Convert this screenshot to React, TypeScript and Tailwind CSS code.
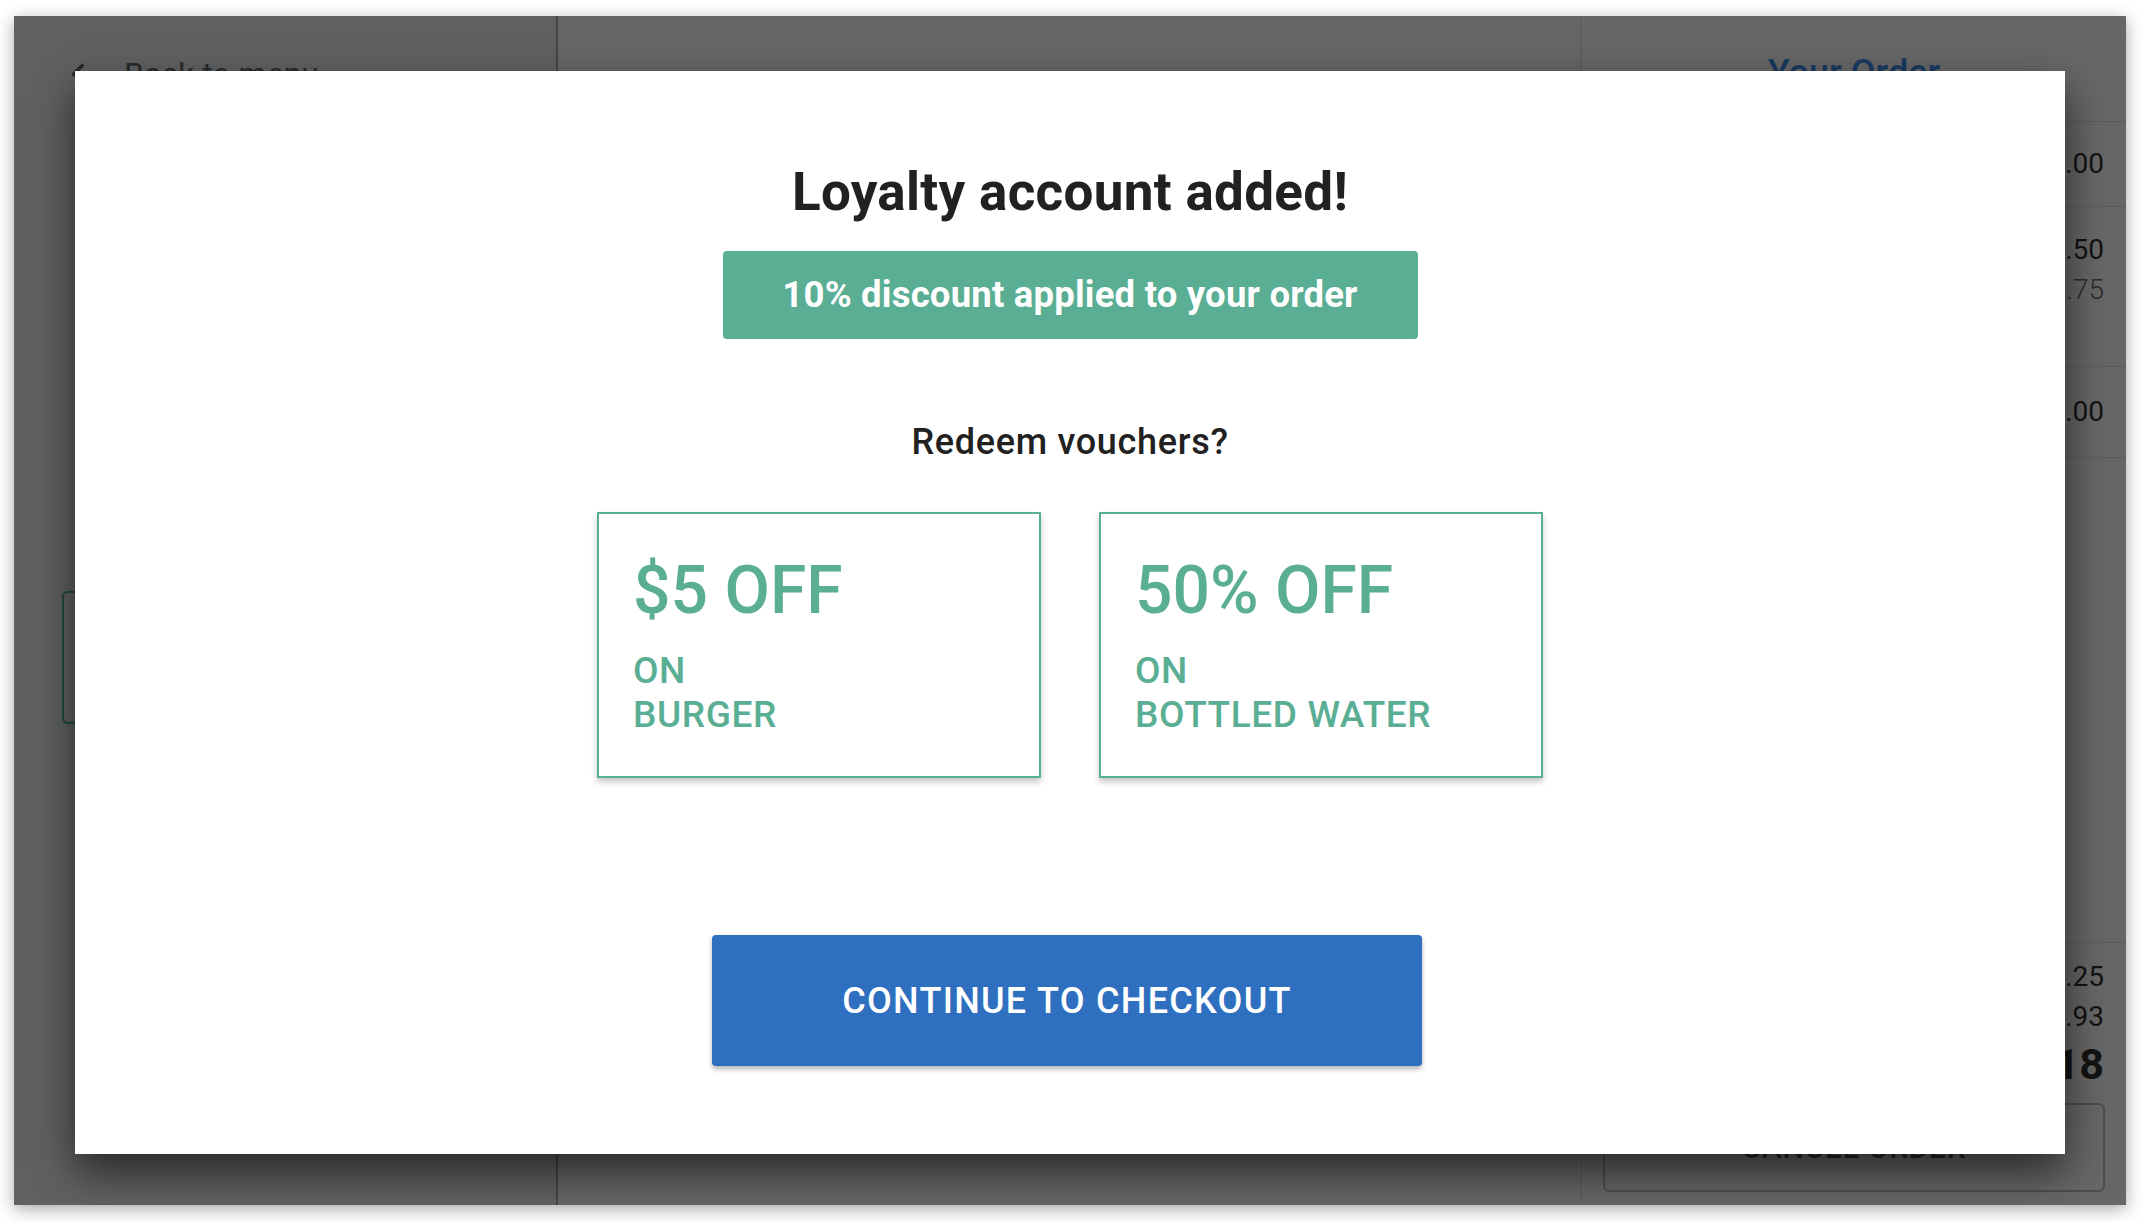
import { ChevronLeft } from "lucide-react";

type Voucher = { amount: string; item: string };

const vouchers: Voucher[] = [
  { amount: "$5 OFF", item: "BURGER" },
  { amount: "50% OFF", item: "BOTTLED WATER" },
];

// the app behind the dialog, already dimmed by the overlay
const Sidebar = () => (
  <div className="flex h-full w-[544px] shrink-0 flex-col bg-[#606163] shadow-[2px_0_4px_rgba(0,0,0,0.35)] border-r-2 border-[#454546]">
    <div className="flex items-center gap-[29px] pl-[47px] pt-[41px] text-[#2a2a2b]">
      <ChevronLeft size={34} strokeWidth={2.5} />
      <span className="text-[32px] leading-none">Back to menu</span>
    </div>
    <div className="ml-[48px] mt-[500px] h-[133px] w-[448px] rounded-md border-2 border-[#1f4b3c]" />
  </div>
);

const PriceRow = ({ height, prices }: { height: string; prices: React.ReactNode }) => (
  <div className={`flex flex-col items-end justify-center border-b border-[#5c5c5c] pr-[22px] ${height}`}>
    {prices}
  </div>
);

const OrderPanel = () => (
  <div className="flex h-full w-[545px] shrink-0 flex-col border-l border-[#5b5b5b] bg-[#676767] text-[#131313]">
    <div className="h-[106px] shrink-0 border-b border-[#5c5c5c] pt-[39px] text-center">
      <span className="text-[36px] font-medium leading-none text-[#193a62]">Your Order</span>
    </div>
    <PriceRow height="h-[85px]" prices={<span className="text-[28px] leading-none">$12.00</span>} />
    <div className="flex h-[160px] flex-col items-end border-b border-[#5c5c5c] pr-[22px] pt-[29px]">
      <span className="text-[28px] leading-none">$4.50</span>
      <span className="mt-[12px] text-[28px] font-light leading-none text-[#2c2c2c]">$0.75</span>
    </div>
    <PriceRow height="h-[91px]" prices={<span className="text-[28px] leading-none">$3.00</span>} />
    <div className="flex-1 border-b border-[#5c5c5c]" />
    <div className="flex flex-col items-end pr-[22px] pt-[20px]">
      <span className="text-[28px] leading-none">$20.25</span>
      <span className="mt-[12px] text-[28px] leading-none">$1.93</span>
      <span className="mt-[12px] text-[43px] font-bold leading-none">$20.18</span>
    </div>
    <div className="mx-[21px] mb-[13px] mt-[17px] flex h-[89px] items-center justify-center rounded-md border-2 border-[#4e4e4e] text-[30px] font-medium leading-none tracking-wide text-[#262626]">
      CANCEL ORDER
    </div>
  </div>
);

const VoucherCard = ({ voucher }: { voucher: Voucher }) => (
  <button className="flex h-[266px] w-[444px] flex-col items-start border-2 border-[#5aae94] bg-white pl-[34px] pt-[44px] text-left text-[#5aae94] shadow-[0_4px_6px_rgba(0,0,0,0.22)]">
    <span className="text-[66px] font-medium leading-none">{voucher.amount}</span>
    <span className="mt-[25px] text-[37px] font-medium leading-[44px] tracking-[0.6px]">
      ON
      <br />
      {voucher.item}
    </span>
  </button>
);

const LoyaltyModal = () => (
  <div className="absolute left-[61px] top-[55px] flex h-[1083px] w-[1990px] flex-col items-center bg-white pt-[95px] shadow-[0_18px_40px_rgba(0,0,0,0.6)]">
    <h1 className="text-[53px] font-bold leading-none tracking-[0.3px] text-[#212121]">Loyalty account added!</h1>
    <div className="mt-[32px] flex h-[88px] w-[695px] items-center justify-center rounded-[4px] bg-[#5aae94] text-[36.5px] font-bold tracking-[0.2px] text-white">
      10% discount applied to your order
    </div>
    <p className="mt-[85px] text-[36px] font-medium leading-none tracking-[0.7px] text-[#212121]">Redeem vouchers?</p>
    <div className="mt-[52px] flex gap-[58px]">
      {vouchers.map((v) => (
        <VoucherCard key={v.item} voucher={v} />
      ))}
    </div>
    <button className="mr-[6px] mt-[157px] flex h-[131px] w-[710px] items-center justify-center rounded-[4px] bg-[#2f6fbf] text-[36px] font-medium tracking-[1.3px] text-white shadow-[0_3px_5px_rgba(0,0,0,0.3)]">
      CONTINUE TO CHECKOUT
    </button>
  </div>
);

export default function App() {
  return (
    <div className="min-h-screen w-full bg-white pl-[14px] pt-[16px] font-['Roboto',sans-serif]">
      <div className="relative flex h-[1189px] w-[2112px] overflow-hidden bg-[#666666] shadow-[0_4px_16px_rgba(0,0,0,0.35)]">
        <Sidebar />
        <div className="h-full flex-1 bg-[#666666]" />
        <OrderPanel />
        <LoyaltyModal />
      </div>
    </div>
  );
}
